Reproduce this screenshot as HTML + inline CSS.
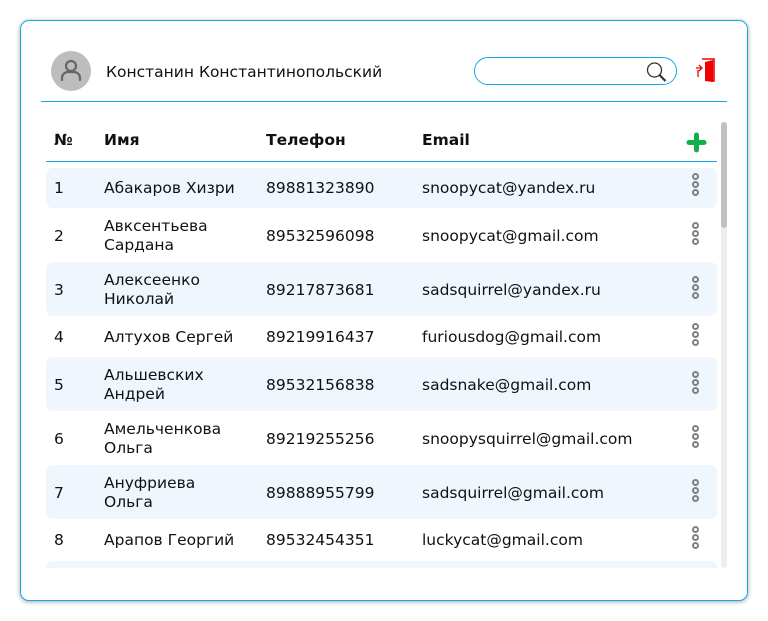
<!DOCTYPE html>
<html><head><meta charset="utf-8"><style>
*{margin:0;padding:0;box-sizing:border-box}
body{width:768px;height:621px;background:#fff;font-family:"DejaVu Sans","Liberation Sans",sans-serif;font-size:15.5px;color:#111;position:relative;overflow:hidden}
.card{position:absolute;left:20px;top:20px;width:728px;height:581px;border:1px solid #14a8e8;border-radius:9px;box-shadow:0 1px 5px rgba(0,0,0,.35);background:#fff}
.abs{position:absolute}
.av{left:51px;top:51px;width:40px;height:40px;border-radius:50%;background:#bdbdbd}
.search{left:474px;top:57px;width:203px;height:28px;border:1px solid #14a8e8;border-radius:14px}
.line{background:#14a8e8;height:1px}
.hd{font-weight:bold;top:131px}
.rows{position:absolute;left:46px;top:168px;width:671px;height:400px;overflow:hidden}
.r{position:absolute;left:0;width:671px;border-radius:7px}
.r.b{background:#eff6fe}
.c{position:absolute;line-height:19px;margin-top:1px}
.dots{position:absolute;left:646px;width:8px}
.dots i{display:block;width:7px;height:7px;border:2px solid #808080;border-radius:50%;margin-bottom:1px}
</style></head><body>
<div class="card"></div>
<div class="abs av"><svg width="40" height="40" viewBox="0 0 40 40"><circle cx="20" cy="15" r="5" fill="none" stroke="#666" stroke-width="2.2"/><path d="M11 29v-2a6 6 0 0 1 6-6h6a6 6 0 0 1 6 6v2" fill="none" stroke="#666" stroke-width="2.2" stroke-linecap="round"/></svg></div>
<div class="abs" style="left:106px;top:63px">Констанин Константинопольский</div>
<div class="abs search"><svg class="abs" style="left:170px;top:2px" width="24" height="24" viewBox="0 0 24 24"><circle cx="9.5" cy="10" r="7" fill="none" stroke="#333" stroke-width="1.3"/><path d="M14.5 15l6 6" stroke="#333" stroke-width="2.2"/></svg></div>
<svg class="abs" style="left:694px;top:57px" width="24" height="28" viewBox="0 0 24 28"><path d="M8 2h12v22h-3" fill="none" stroke="#e00" stroke-width="1.6"/><path d="M11 5l8-2v22l-8-1z" fill="#e00"/><path d="M2 11h6M5 8l3 3-3 3M4 13v7" fill="none" stroke="#e00" stroke-width="1.3"/></svg>
<div class="abs line" style="left:41px;top:101px;width:686px"></div>
<div class="abs hd" style="left:54px">№</div>
<div class="abs hd" style="left:104px">Имя</div>
<div class="abs hd" style="left:266px">Телефон</div>
<div class="abs hd" style="left:422px">Email</div>
<svg class="abs" style="left:686px;top:132px" width="21" height="21" viewBox="0 0 21 21"><path d="M10.5 3v15M3 10.5h15" stroke="#12b04a" stroke-width="5" stroke-linecap="round"/></svg>
<div class="abs line" style="left:46px;top:161px;width:671px"></div>
<div class="abs" style="left:721px;top:122px;width:6px;height:446px;background:#eee;border-radius:3px"></div>
<div class="abs" style="left:721px;top:122px;width:6px;height:106px;background:#c1c1c1;border-radius:3px"></div>
<div class="rows">
<div class="r b" style="top:0;height:40px"><div class="c" style="left:8px;top:10px">1</div><div class="c" style="left:58px;top:10px">Абакаров Хизри</div><div class="c" style="left:220px;top:10px">89881323890</div><div class="c" style="left:376px;top:10px">snoopycat@yandex.ru</div><div class="dots" style="top:5px"><i></i><i></i><i></i></div></div>
<div class="r" style="top:40px;height:54px"><div class="c" style="left:8px;top:18px">2</div><div class="c" style="left:58px;top:8px">Авксентьева<br>Сардана</div><div class="c" style="left:220px;top:18px">89532596098</div><div class="c" style="left:376px;top:18px">snoopycat@gmail.com</div><div class="dots" style="top:14px"><i></i><i></i><i></i></div></div>
<div class="r b" style="top:94px;height:54px"><div class="c" style="left:8px;top:18px">3</div><div class="c" style="left:58px;top:8px">Алексеенко<br>Николай</div><div class="c" style="left:220px;top:18px">89217873681</div><div class="c" style="left:376px;top:18px">sadsquirrel@yandex.ru</div><div class="dots" style="top:14px"><i></i><i></i><i></i></div></div>
<div class="r" style="top:148px;height:41px"><div class="c" style="left:8px;top:11px">4</div><div class="c" style="left:58px;top:11px">Алтухов Сергей</div><div class="c" style="left:220px;top:11px">89219916437</div><div class="c" style="left:376px;top:11px">furiousdog@gmail.com</div><div class="dots" style="top:7px"><i></i><i></i><i></i></div></div>
<div class="r b" style="top:189px;height:54px"><div class="c" style="left:8px;top:18px">5</div><div class="c" style="left:58px;top:8px">Альшевских<br>Андрей</div><div class="c" style="left:220px;top:18px">89532156838</div><div class="c" style="left:376px;top:18px">sadsnake@gmail.com</div><div class="dots" style="top:14px"><i></i><i></i><i></i></div></div>
<div class="r" style="top:243px;height:54px"><div class="c" style="left:8px;top:18px">6</div><div class="c" style="left:58px;top:8px">Амельченкова<br>Ольга</div><div class="c" style="left:220px;top:18px">89219255256</div><div class="c" style="left:376px;top:18px">snoopysquirrel@gmail.com</div><div class="dots" style="top:14px"><i></i><i></i><i></i></div></div>
<div class="r b" style="top:297px;height:54px"><div class="c" style="left:8px;top:18px">7</div><div class="c" style="left:58px;top:8px">Ануфриева<br>Ольга</div><div class="c" style="left:220px;top:18px">89888955799</div><div class="c" style="left:376px;top:18px">sadsquirrel@gmail.com</div><div class="dots" style="top:14px"><i></i><i></i><i></i></div></div>
<div class="r" style="top:351px;height:42px"><div class="c" style="left:8px;top:11px">8</div><div class="c" style="left:58px;top:11px">Арапов Георгий</div><div class="c" style="left:220px;top:11px">89532454351</div><div class="c" style="left:376px;top:11px">luckycat@gmail.com</div><div class="dots" style="top:7px"><i></i><i></i><i></i></div></div>
<div class="r b" style="top:393px;height:54px"></div>
</div>
</body></html>
